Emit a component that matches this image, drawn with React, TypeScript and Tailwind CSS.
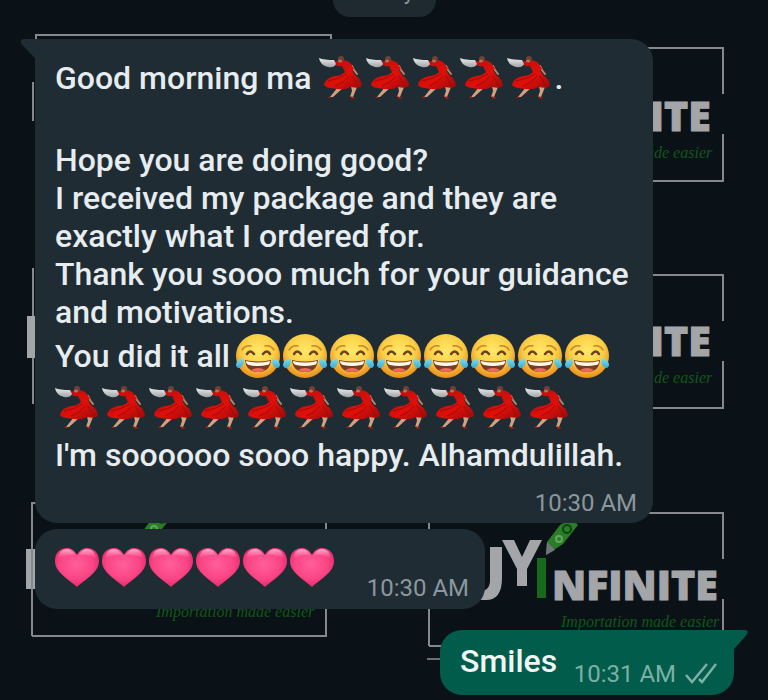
import React from "react";

function Dancer() {
  return (
    <svg className="h-[47px] w-[47px] shrink-0" viewBox="0 0 47 47" role="img" aria-label="dancer">
      <defs>
        <linearGradient id="fan" x1="0" y1="0" x2="0" y2="1">
          <stop offset="0" stopColor="#ececec" />
          <stop offset="1" stopColor="#9fa4a8" />
        </linearGradient>
        <linearGradient id="dress" x1="0" y1="0" x2="1" y2="1">
          <stop offset="0" stopColor="#b30f0d" />
          <stop offset=".55" stopColor="#e00f0a" />
          <stop offset="1" stopColor="#960c0a" />
        </linearGradient>
      </defs>
      <path d="M19 32 L11 42 L14 42 L24 33Z M32 31 L33 36 L31 42 L34 42 L38 32Z" fill="#d3a080" />
      <path d="M11 41 L9 43 L13 43Z M31 41 L33 44 L37 43Z" fill="#a51d16" />
      <path d="M33 11 L35 15 L38 19" fill="none" stroke="#b9836a" strokeWidth="2" strokeLinecap="round" />
      <path d="M14 6 Q20 7 22 5 Q29 5 32 9 L35 14 L33 15 L36 20 Q43 25 43 31 Q40 34 32 32 Q25 36 12 33 Q5 32 5 29 Q7 23 16 21 Q22 21 26 17 L23 11 Q19 12 15 9Z" fill="url(#dress)" />
      <path d="M28 19 Q20 24 9 26 M30 21 Q25 28 16 31 M33 21 Q37 26 38 31" fill="none" stroke="#a50a08" strokeWidth="1" />
      <path d="M0 3 Q5 5 15 5 L17 9 Q15 13 9 12 Q1 10 0 3Z" fill="url(#fan)" />
      <circle cx="22" cy="4" r="3" fill="#6f4033" />
      <ellipse cx="21" cy="6" rx="2" ry="1.5" fill="#b5745b" />
    </svg>
  );
}

function JoyFace() {
  return (
    <svg className="h-[47px] w-[47px] shrink-0" viewBox="0 0 47 47" role="img" aria-label="face with tears of joy">
      <defs>
        <radialGradient id="face" cx=".5" cy=".38" r=".62">
          <stop offset="0" stopColor="#ffe768" />
          <stop offset=".6" stopColor="#fbcf45" />
          <stop offset="1" stopColor="#e88a1c" />
        </radialGradient>
        <linearGradient id="tear" x1="0" y1="0" x2="0" y2="1">
          <stop offset="0" stopColor="#7edbf0" />
          <stop offset="1" stopColor="#38acd2" />
        </linearGradient>
      </defs>
      <circle cx="22" cy="23" r="22" fill="url(#face)" />
      <path d="M11 21 Q14 16 18 21 M27 21 Q31 16 34 21" fill="none" stroke="#6b431d" strokeWidth="2.5" strokeLinecap="round" />
      <path d="M6 17 Q9 12 15 13 M29 13 Q35 12 38 17" fill="none" stroke="#c58628" strokeWidth="1.5" strokeLinecap="round" />
      <path d="M9 27 Q22 30 35 27 Q34 39 22 39 Q10 39 9 27Z" fill="#793c25" />
      <path d="M10 28 Q22 31 34 28 Q34 32 31 32 Q22 34 13 32 Q10 31 10 28Z" fill="#fff9e7" />
      <path d="M15 37 Q22 33 29 37 Q22 41 15 37Z" fill="#ed6b5c" />
      <path d="M8 26 Q2 25 0 31 Q0 35 3 35 Q8 34 8 26Z M36 26 Q42 25 44 31 Q44 35 41 35 Q36 34 36 26Z" fill="url(#tear)" />
    </svg>
  );
}

function Heart() {
  return (
    <svg className="h-[47px] w-[47px] shrink-0" viewBox="0 0 47 47" role="img" aria-label="pink heart">
      <defs>
        <radialGradient id="heart" cx=".48" cy=".42" r=".62">
          <stop offset="0" stopColor="#ff5f9a" />
          <stop offset=".6" stopColor="#fb4585" />
          <stop offset="1" stopColor="#e02468" />
        </radialGradient>
        <linearGradient id="shine" x1="0" y1="0" x2="0" y2="1">
          <stop offset="0" stopColor="#ffb5d2" />
          <stop offset="1" stopColor="#ff78aa" stopOpacity="0" />
        </linearGradient>
      </defs>
      <path d="M22 10 C19 5 16 3 12 3 C5 3 0 8 0 16 C0 27 12 33 22 42 C32 33 44 27 44 16 C44 8 39 3 32 3 C28 3 25 5 22 10Z" fill="url(#heart)" />
      <path d="M3 14 Q4 4 12 4 Q17 4 20 10 Q11 9 3 14Z M24 10 Q27 4 32 4 Q40 4 41 14 Q33 9 24 10Z" fill="url(#shine)" />
    </svg>
  );
}

function Repeat({ of: Item, count }: { of: () => React.ReactElement; count: number }) {
  return (
    <span className="flex">
      {Array.from({ length: count }, (_, i) => (
        <Item key={i} />
      ))}
    </span>
  );
}

function Logo({ x, y, dx = 0, dy = 0 }: { x: number; y: number; dx?: number; dy?: number }) {
  return (
    <g transform={`translate(${x} ${y})`}>
      <path d="M0 133 V0 H294 V46 M294 86 V133 H0" fill="none" stroke="#85888d" strokeWidth="2" />
      <g transform={`translate(${dx} ${dy})`} fill="#a4a5a9">
        <path d="M61 34 H73 V65 Q73 87 57 87 H49 V78 Q61 79 61 67Z" />
        <path d="M73 27 H85 L93 44 L101 27 H113 L98 56 V73 H88 V56Z" />
        <path d="M108 45 H117 V85 H108Z" fill="#17691b" />
        <path d="M117 42 L118 29 L131 12 Q143 5 149 12 L134 31Z" fill="#297d28" />
        <path d="M117 42 L118 29 L126 37Z" fill="#717478" />
        <circle cx="138" cy="16" r="4" fill="none" stroke="#0c450e" strokeWidth="2" />
        <circle cx="130" cy="26" r="3" fill="none" stroke="#65a560" strokeWidth="2" />
        <text x="123" y="87" fontFamily="'Open Sans', sans-serif" fontSize="41" fontWeight="800" stroke="#a4a5a9" strokeWidth="1">NFINITE</text>
        <text x="132" y="114" fill="#125618" fontFamily="'Liberation Serif', serif" fontSize="16" fontStyle="italic">Importation made easier</text>
      </g>
    </g>
  );
}

function Wallpaper() {
  return (
    <svg className="absolute top-0 left-0 h-[700px] w-[768px]" viewBox="0 0 768 700" aria-hidden="true">
      <path d="M36 39 V35 H331 V39 M33 82 V121 M33 268 V404" fill="none" stroke="#85888d" strokeWidth="2" />
      <path d="M27 316 H36 V358 H27Z M26 549 H36 V589 H26Z" fill="#a4a5a9" />
      <Logo x={429} y={48} dx={-7} dy={-4} />
      <Logo x={429} y={275} dx={-7} dy={-6} />
      <Logo x={32} y={503} dx={-8} />
      <Logo x={429} y={513} />
      <path d="M427 659 H723" stroke="#6b6e73" strokeWidth="2" />
    </svg>
  );
}

const line = "h-[38px]";
const emojiLine = "flex h-[50px] items-center";
const stamp = "text-[24px] leading-[28px] text-[#8b979e]";

export default function App() {
  return (
    <main className="relative min-h-screen overflow-hidden bg-[#0a1218] font-['Roboto',sans-serif]">
      <Wallpaper />
      <div className="relative flex flex-col pr-[34px] pl-[35px]">
        <div className="-mt-[25px] flex h-[42px] w-[103px] items-start justify-center self-center rounded-[17px] bg-[#1f2a30] pt-1 text-[22px] leading-[26px] text-[#8b979e]">
          Today
        </div>

        <article className="relative mt-[22px] flex w-[618px] flex-col rounded-[22px] rounded-tl-none bg-[#202c33] px-5 pt-[14px] pb-[6px] text-[32px] leading-[38px] font-medium whitespace-nowrap text-[#e6ecef]">
          <svg className="absolute top-0 -left-[15px] h-[20px] w-[16px]" viewBox="0 0 16 20" aria-hidden="true">
            <path d="M16 0 H4 Q0 0 1 4 Q2 6 16 20Z" fill="#202c33" />
          </svg>
          <p className={emojiLine}>
            <span className="mr-2">Good morning ma</span>
            <Repeat of={Dancer} count={5} />
            <span>.</span>
          </p>
          <p className={line} />
          <p className={line}>Hope you are doing good?</p>
          <p className={line}>I received my package and they are</p>
          <p className={line}>exactly what I ordered for.</p>
          <p className={line}>Thank you sooo much for your guidance</p>
          <p className={line}>and motivations.</p>
          <p className={emojiLine}>
            <span className="mr-1.5">You did it all</span>
            <Repeat of={JoyFace} count={8} />
          </p>
          <p className="flex h-[55px] items-center">
            <Repeat of={Dancer} count={11} />
          </p>
          <p className={line}>I'm soooooo sooo happy. Alhamdulillah.</p>
          <time className={`${stamp} mt-[15px] -mr-1 self-end font-normal`}>10:30 AM</time>
        </article>

        <article className="mt-[6px] flex h-[80px] w-[450px] items-end justify-between rounded-[22px] bg-[#202c33] pr-4 pb-[7px] pl-5">
          <div className="mb-[10px]">
            <Repeat of={Heart} count={6} />
          </div>
          <time className={stamp}>10:30 AM</time>
        </article>

        <article className="relative mt-[21px] flex h-[65px] w-[294px] items-end justify-between self-end rounded-[22px] rounded-tr-none bg-[#025c4b] pr-4 pb-[7px] pl-5">
          <svg className="absolute top-0 -right-[14px] h-[20px] w-[15px]" viewBox="0 0 15 20" aria-hidden="true">
            <path d="M0 0 H12 Q16 0 14 4 Q13 6 0 20Z" fill="#025c4b" />
          </svg>
          <p className="mb-2 text-[32px] leading-[38px] font-medium text-[#f0f5f4]">Smiles</p>
          <div className="flex items-center gap-2">
            <time className="text-[24px] leading-[28px] text-[#7cb0a5]">10:31 AM</time>
            <svg className="h-[24px] w-[34px]" viewBox="0 0 34 24" fill="none" stroke="#7cb0a5" strokeWidth="2.5" role="img" aria-label="Delivered">
              <path d="M2 13 L8 20 L23 2 M15 17 L18 20 L32 2" />
            </svg>
          </div>
        </article>
      </div>
    </main>
  );
}
